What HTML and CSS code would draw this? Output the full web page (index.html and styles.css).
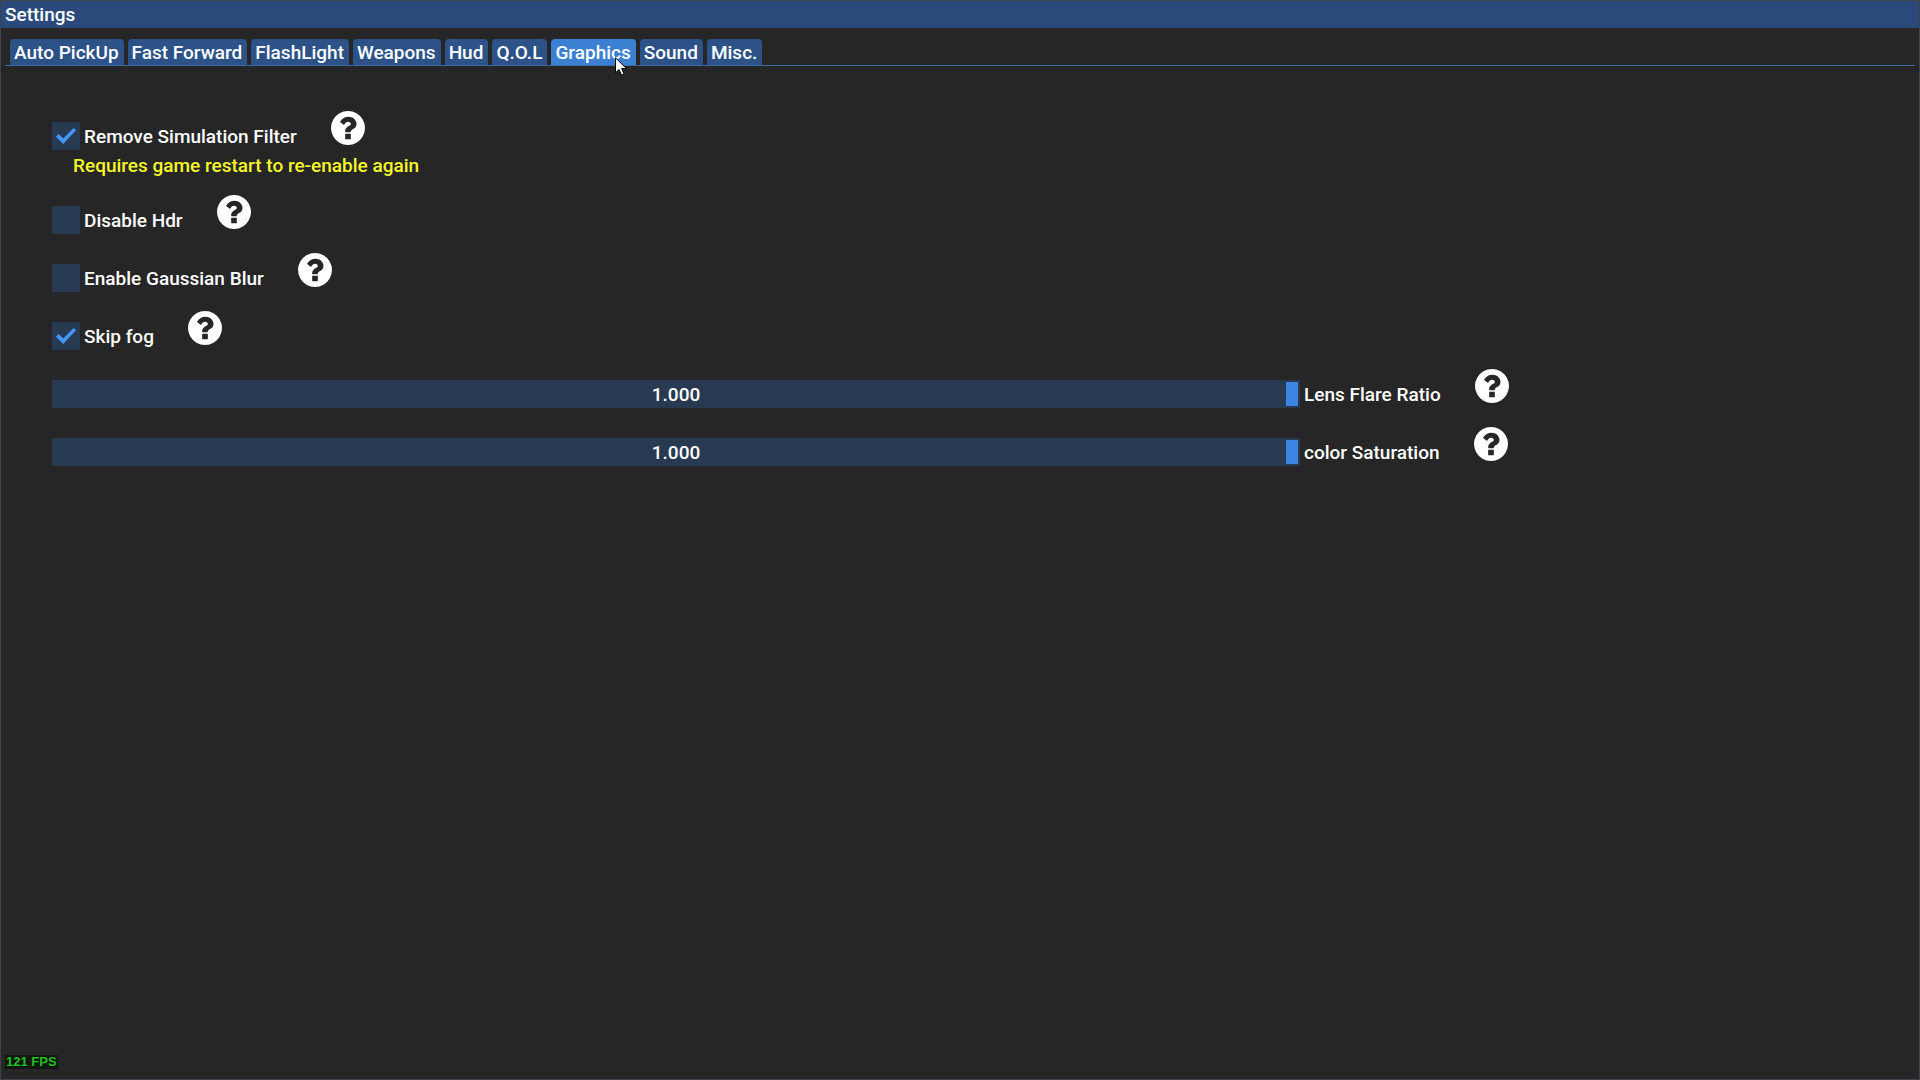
FILE: index.html
```
<!DOCTYPE html>
<html lang="en">
<head>
    <meta charset="UTF-8">
    <meta name="viewport" content="width=device-width, initial-scale=1.0">
    <title>Settings</title>
    <link rel="stylesheet" href="styles.css">
</head>
<body>

    <!-- shared help icon -->
    <svg class="defs" aria-hidden="true">
        <symbol id="help" viewBox="128 128 1536 1536">
            <path d="M1024 1376v-192q0-14-9-23t-23-9h-192q-14 0-23 9t-9 23v192q0 14 9 23t23 9h192q14 0 23-9t9-23zm256-672q0-88-55.500-163t-138.500-116-170-41q-243 0-371 213-15 24 8 42l132 100q7 6 19 6 16 0 25-12 53-68 86-92 34-24 86-24 48 0 85.500 26t37.500 59q0 38-20 61t-68 45q-63 28-115.500 86.500t-52.500 125.500v36q0 14 9 23t23 9h192q14 0 23-9t9-23q0-19 21.500-49.500t54.500-49.500q32-18 49-28.500t46-35 44.500-48 28-60.500 12.500-81zm384 192q0 209-103 385.500t-279.500 279.500-385.500 103-385.500-103-279.500-279.500-103-385.500 103-385.500 279.500-279.500 385.500-103 385.500 103 279.500 279.500 103 385.500z"/>
        </symbol>
    </svg>

    <div class="window">
        <h1 class="title-bar">Settings</h1>

        <div class="tabs" role="tablist">
            <button class="tab" role="tab">Auto PickUp</button>
            <button class="tab" role="tab">Fast Forward</button>
            <button class="tab" role="tab">FlashLight</button>
            <button class="tab" role="tab">Weapons</button>
            <button class="tab" role="tab">Hud</button>
            <button class="tab" role="tab">Q.O.L</button>
            <button class="tab active" role="tab" aria-selected="true">Graphics
                <svg class="cursor" viewBox="0 0 12 19" aria-hidden="true"><path d="M.5 .8v15l3.500-3.300 2.600 5.700 2.500-1.100-2.500-5.500h4.900z"/></svg>
            </button>
            <button class="tab" role="tab">Sound</button>
            <button class="tab" role="tab">Misc.</button>
        </div>

        <main class="panel">
            <div class="option">
                <div class="row">
                    <input type="checkbox" id="simFilter" checked>
                    <label for="simFilter">Remove Simulation Filter</label>
                    <svg class="help"><use href="#help"/></svg>
                </div>
                <p class="warning">Requires game restart to re-enable again</p>
            </div>
            <div class="row">
                <input type="checkbox" id="hdr">
                <label for="hdr">Disable Hdr</label>
                <svg class="help"><use href="#help"/></svg>
            </div>
            <div class="row">
                <input type="checkbox" id="blur">
                <label for="blur">Enable Gaussian Blur</label>
                <svg class="help"><use href="#help"/></svg>
            </div>
            <div class="row">
                <input type="checkbox" id="fog" checked>
                <label for="fog">Skip fog</label>
                <svg class="help"><use href="#help"/></svg>
            </div>
            <div class="row">
                <div class="slider">
                    <input type="range" id="lensFlare" min="0" max="1" step="0.001" value="1">
                    <output for="lensFlare">1.000</output>
                </div>
                <label for="lensFlare">Lens Flare Ratio</label>
                <svg class="help"><use href="#help"/></svg>
            </div>
            <div class="row">
                <div class="slider">
                    <input type="range" id="saturation" min="0" max="1" step="0.001" value="1">
                    <output for="saturation">1.000</output>
                </div>
                <label for="saturation">color Saturation</label>
                <svg class="help"><use href="#help"/></svg>
            </div>
        </main>

        <div class="fps">121 FPS</div>
    </div>

    <script>
        document.querySelectorAll('.slider input').forEach(input => {
            input.addEventListener('input', () => {
                input.nextElementSibling.value = Number(input.value).toFixed(3);
            });
        });
    </script>
</body>
</html>
```
FILE: styles.css
```
* {
    box-sizing: border-box;
}
body {
    margin: 0;
    font-family: Roboto, sans-serif;
    font-size: 19px;
    font-weight: 500;
    line-height: 22px;
    color: #fff;
    background: #262626;
}
.defs {
    display: none;
}
.window {
    display: flex;
    flex-direction: column;
    min-height: 100vh;
    border: 1px solid #41414b;
}
.title-bar {
    margin: 0;
    padding: 3px 4px 2px;
    font-size: 19px;
    font-weight: 500;
    background: #294a7a;
}
.tabs {
    display: flex;
    gap: 4px;
    margin: 11px 4px 0;
    padding: 0 5px;
    border-bottom: 1px solid #3a6ca8;
}
.tab {
    position: relative;
    height: 26px;
    padding: 1px 5px 0 4px;
    border: none;
    border-radius: 4px 4px 0 0;
    font: inherit;
    color: #fff;
    background: #2c5288;
}
.tab.active {
    background: #3b80d3;
}
.cursor {
    position: absolute;
    left: 64px;
    top: 18px;
    z-index: 1;
    width: 12px;
    height: 19px;
    fill: #fff;
    stroke: #000;
}
.panel {
    display: flex;
    flex-direction: column;
    gap: 19px;
    padding: 45px 51px;
}
.row {
    display: flex;
    align-items: flex-end;
    height: 39px;
}
.row label {
    padding: 4px 34px 2px 4px;
    white-space: nowrap;
}
.help {
    align-self: flex-start;
    flex: none;
    width: 34px;
    height: 34px;
    fill: #fff;
}
.warning {
    margin: 5px 0 -1px;
    padding-left: 21px;
    color: #f6f62a;
}
input[type="checkbox"] {
    appearance: none;
    display: grid;
    place-items: center;
    width: 28px;
    height: 28px;
    margin: 0;
    background: #283952;
}
input[type="checkbox"]:checked::before {
    content: "";
    width: 20px;
    height: 16px;
    background: #4296fa;
    clip-path: polygon(0 54%, 13% 37%, 36% 66%, 88% 0, 100% 14%, 36% 100%);
}
.slider {
    position: relative;
    width: 65vw;
    height: 28px;
}
.slider input {
    appearance: none;
    display: block;
    width: 100%;
    height: 28px;
    margin: 0;
    padding: 2px;
    background: #283952;
}
.slider input::-webkit-slider-thumb {
    appearance: none;
    width: 12px;
    height: 24px;
    background: #3d85e0;
}
.slider output {
    position: absolute;
    inset: 4px 0 2px;
    text-align: center;
    pointer-events: none;
}
.fps {
    align-self: flex-start;
    margin: auto 0 10px 4px;
    padding: 0 1px;
    font-family: "Liberation Sans", sans-serif;
    font-size: 13px;
    font-weight: bold;
    line-height: 14px;
    color: #1fc01f;
    background: #101810;
}
```
